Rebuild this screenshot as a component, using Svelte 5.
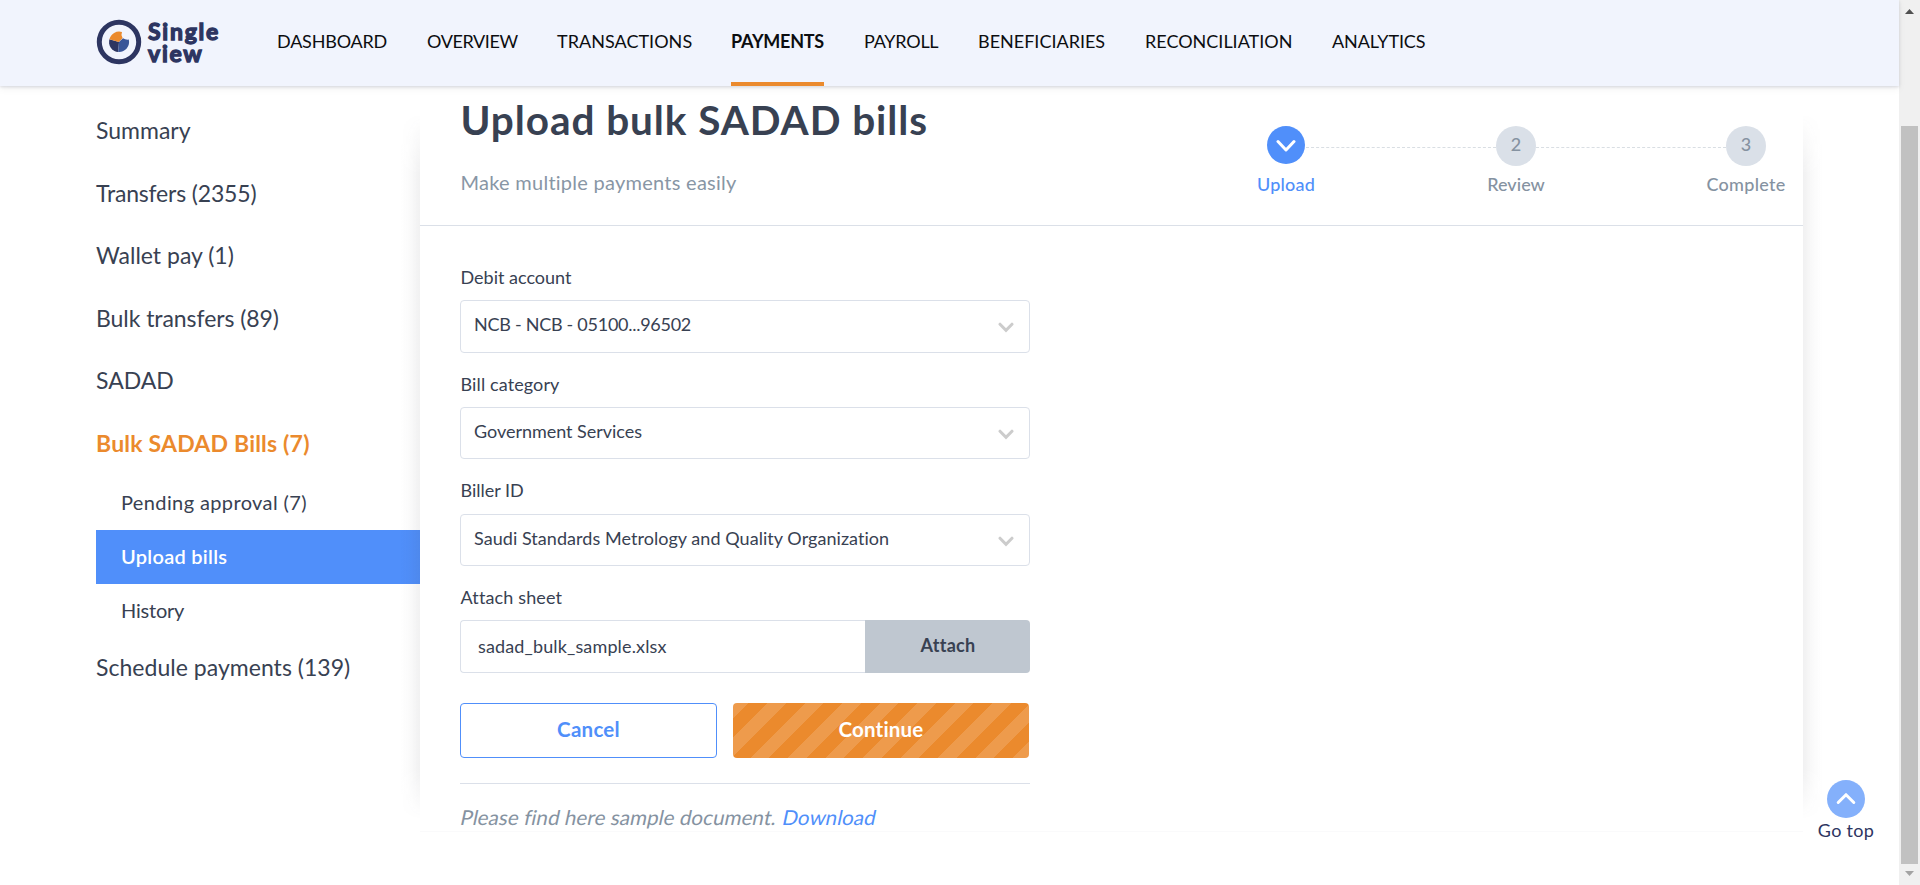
<script>
  const nav = [
    { label: 'DASHBOARD', width: 110, ls: -0.2 },
    { label: 'OVERVIEW', width: 90, ls: -0.4 },
    { label: 'TRANSACTIONS', width: 134, ls: 0.03 },
    { label: 'PAYMENTS', width: 93, ls: -0.25, active: true },
    { label: 'PAYROLL', width: 74, ls: -0.25 },
    { label: 'BENEFICIARIES', width: 127, ls: 0 },
    { label: 'RECONCILIATION', width: 147, ls: 0 },
    { label: 'ANALYTICS', width: 96, ls: -0.1 }
  ];
  const menu = [
    { label: 'Summary', ls: 0 },
    { label: 'Transfers (2355)', ls: -0.17 },
    { label: 'Wallet pay (1)', ls: 0 },
    { label: 'Bulk transfers (89)', ls: -0.06 },
    { label: 'SADAD', ls: 0 },
    { label: 'Bulk SADAD Bills (7)', ls: 0.2, active: true },
    { label: 'Pending approval (7)', ls: 0.38, sub: true },
    { label: 'Upload bills', ls: 0.28, sub: true, active: true },
    { label: 'History', ls: -0.2, sub: true },
    { label: 'Schedule payments (139)', ls: 0.03 }
  ];
  const fields = [
    { label: 'Debit account', ll: 0, value: 'NCB - NCB - 05100...96502', ls: -0.27 },
    { label: 'Bill category', ll: 0.12, value: 'Government Services', ls: -0.03 },
    { label: 'Biller ID', ll: 0, value: 'Saudi Standards Metrology and Quality Organization', ls: 0.05 }
  ];
</script>

<div class="page">
  <div class="view">
    <header>
      <a class="logo" href="#top" aria-label="Single view">
        <svg width="46" height="46" viewBox="0 0 46 46">
          <circle cx="23" cy="23" r="19.7" fill="none" stroke="#2d3561" stroke-width="5" />
          <path d="M23 23 L13.4 20.3 A10 10 0 0 0 22.2 33 Z" fill="#2d3561" />
          <path d="M23 23 L13.4 20.3 A10 10 0 0 1 26 13 A6 6 0 0 0 26.6 19 Z" fill="#eb8a2d" />
          <path d="M23 23 L27 19.3 Q29.5 21 32.8 20.6 A10 10 0 0 1 22.2 33 Z" fill="#3a5698" />
        </svg>
        <span class="brand"><span>Single</span><span>view</span></span>
      </a>
      <nav>
        {#each nav as n}
          <a href="#nav" class:active={n.active} style="width:{n.width}px;letter-spacing:{n.ls}px">{n.label}</a>
        {/each}
      </nav>
    </header>

    <div class="body">
      <aside>
        {#each menu as m}
          <a href="#menu" class:sub={m.sub} class:active={m.active} style="letter-spacing:{m.ls}px">{m.label}</a>
        {/each}
      </aside>

      <main>
        <section class="head">
          <div>
            <h1>Upload bulk SADAD bills</h1>
            <p>Make multiple payments easily</p>
          </div>
          <ol>
            <li class="done">
              <i><svg width="20" height="14" viewBox="0 0 20 14"><path d="M2 2.5 L10 11 L18 2.5" fill="none" stroke="#fff" stroke-width="3" stroke-linecap="round" stroke-linejoin="round" /></svg></i>
              <span class="s1">Upload</span>
            </li>
            <li class="line"></li>
            <li><i>2</i><span class="s2">Review</span></li>
            <li class="line"></li>
            <li><i>3</i><span class="s3">Complete</span></li>
          </ol>
        </section>

        <section class="form">
          {#each fields as f}
            <div class="field">
              <div class="label" style="letter-spacing:{f.ll}px">{f.label}</div>
              <div class="select">
                <span style="letter-spacing:{f.ls}px">{f.value}</span>
                <svg width="16" height="11" viewBox="0 0 16 11"><path d="M2 2.2 L8 8.3 L14 2.2" fill="none" stroke="#ccc" stroke-width="3" stroke-linecap="round" /></svg>
              </div>
            </div>
          {/each}
          <div class="field">
            <div class="label wide">Attach sheet</div>
            <div class="file">
              <span>sadad_bulk_sample.xlsx</span>
              <button>Attach</button>
            </div>
          </div>
          <div class="actions">
            <button class="cancel">Cancel</button>
            <button class="continue">Continue</button>
          </div>
          <div class="note"><span>Please find here sample document.</span><a href="#file">Download</a></div>
        </section>
      </main>
    </div>

    <a class="gotop" href="#top">
      <i><svg width="20" height="13" viewBox="0 0 20 13"><path d="M2.2 10.5 L10 2.7 L17.8 10.5" fill="none" stroke="#fff" stroke-width="3" stroke-linecap="round" stroke-linejoin="round" /></svg></i>
      <span>Go top</span>
    </a>
  </div>

  <div class="scroll">
    <svg width="9" height="5" viewBox="0 0 9 5"><path d="M0 5 L4.5 0 L9 5 Z" fill="#505050" /></svg>
    <div class="thumb"></div>
    <svg width="9" height="5" viewBox="0 0 9 5"><path d="M0 0 L4.5 5 L9 0 Z" fill="#a3a3a3" /></svg>
  </div>
</div>

<style>
  :global(body) { margin: 0; overflow: hidden; }
  .page { display: flex; height: 885px; font-family: Lato, "Open Sans", sans-serif; color: #384152; background: #fff; font-variant-ligatures: none; }
  .page * { box-sizing: border-box; }
  a { text-decoration: none; color: inherit; white-space: nowrap; }
  i { font-style: normal; }
  button { font-family: inherit; border: 0; padding: 0; margin: 0; font-variant-ligatures: none; }
  .view { width: 1899px; position: relative; }
  header { height: 86px; background: #f1f4fd; display: flex; box-shadow: 0 1px 3px rgba(40, 45, 80, .16), 0 3px 8px rgba(0, 0, 0, .05); position: relative; z-index: 3; }
  .logo { width: 277px; padding: 19px 0 0 95.5px; display: flex; flex: none; color: #2d3561; }
  .brand { display: flex; flex-direction: column; padding: 2px 0 0 6.5px; font-size: 23px; font-weight: 700; line-height: 21.5px; letter-spacing: 1.75px; -webkit-text-stroke: 1.3px #2d3561; stroke-linejoin: round; }
  nav { display: flex; gap: 40px; }
  nav a { height: 86px; font-size: 18px; line-height: 82px; color: #0c0d10; flex: none; }
  nav .active { font-weight: 700; border-bottom: 4px solid #eb8a2d; }
  .body { display: flex; }
  aside { width: 420px; padding: 15px 0 0 96px; display: flex; flex-direction: column; flex: none; }
  aside a { height: 62.5px; line-height: 59px; font-size: 23px; }
  aside .active { color: #eb8a2d; font-weight: 700; }
  aside .sub { height: 54px; line-height: 53px; font-size: 20px; padding-left: 25px; }
  aside .sub.active { background: #508ffa; color: #fff; font-weight: 600; }
  main { width: 1383px; height: 746px; position: relative; background: #fff; border-bottom: 1px solid #fafafb; }
  main::before, main::after { content: ''; position: absolute; top: 28px; bottom: 12px; width: 20px; -webkit-mask-image: linear-gradient(transparent, #000 60px, #000 calc(100% - 50px), transparent); mask-image: linear-gradient(transparent, #000 60px, #000 calc(100% - 50px), transparent); }
  main::before { left: -20px; background: linear-gradient(to left, rgba(60, 60, 70, .075), rgba(60, 60, 70, .02) 55%, transparent); }
  main::after { right: -20px; background: linear-gradient(to right, rgba(60, 60, 70, .075), rgba(60, 60, 70, .02) 55%, transparent); }
  .head { height: 140px; border-bottom: 1px solid #dbe0e8; padding: 10px 37px 0 40.5px; display: flex; justify-content: space-between; }
  h1 { margin: 0; font-size: 40.5px; line-height: 48px; font-weight: 700; letter-spacing: .93px; white-space: nowrap; }
  .head p { margin: 26px 0 0; font-size: 20px; line-height: 24px; color: #8896a5; letter-spacing: .26px; }
  ol { display: flex; list-style: none; margin: 30px 0 0; padding: 0; width: 500px; }
  li { width: 40px; display: flex; flex-direction: column; align-items: center; color: #8592a1; font-size: 18px; font-weight: 500; }
  li i { width: 40px; height: 40px; border-radius: 50%; background: #dae0e8; display: flex; align-items: center; justify-content: center; padding-bottom: 4px; flex: none; }
  li span { line-height: 24px; margin-top: 6px; white-space: nowrap; }
  .done { color: #508ffa; }
  .done i { width: 38px; height: 38px; background: #508ffa; padding: 2px 0 0; margin-bottom: 2px; }
  .line { flex: 1; height: 22px; border-bottom: 1px dashed #d9dee3; }
  .s1 { letter-spacing: .2px; }
  .s2 { letter-spacing: .05px; }
  .s3 { letter-spacing: .27px; }
  .form { width: 610px; padding: 39px 0 0 40px; }
  .field { height: 107px; }
  .field:nth-child(3) { height: 106px; }
  .label { font-size: 18px; line-height: 24px; margin-bottom: 11px; padding-left: .5px; }
  .field:nth-child(3) .label { line-height: 23px; margin-bottom: 12px; }
  .wide { letter-spacing: .14px; }
  .select { height: 53px; border: 1px solid #dbe0e9; border-radius: 4px; display: flex; justify-content: space-between; padding: 0 15px 0 13px; font-size: 18px; }
  .field:nth-child(2) .select, .field:nth-child(3) .select { height: 52px; }
  .select span { line-height: 46px; white-space: nowrap; }
  .select svg { margin-top: 21px; }
  .file { height: 53px; display: flex; font-size: 18px; }
  .file span { flex: 1; border: 1px solid #dbe0e9; border-right: 0; border-radius: 4px 0 0 4px; line-height: 51px; padding-left: 17px; letter-spacing: .14px; }
  .file button { width: 165px; background: #bfc7d0; border-radius: 0 4px 4px 0; font-size: 18px; font-weight: 700; color: #384152; letter-spacing: .25px; padding: 0 0 3px 1px; }
  .actions { display: flex; gap: 16px; margin-top: 11px; padding-bottom: 25px; border-bottom: 1px solid #dbe0e9; }
  .actions button { height: 55px; border-radius: 4px; font-size: 20.5px; font-weight: 700; padding-bottom: 4px; }
  .actions .cancel { width: 257px; background: #fff; border: 1px solid #508ffa; color: #508ffa; letter-spacing: .25px; }
  .actions .continue { width: 296px; color: #fff; letter-spacing: .2px; background: repeating-linear-gradient(135deg, #ee9b4c 0, #ee9b4c 11.2px, #eb8a2d 11.2px, #eb8a2d 24.4px, #ee9b4c 24.4px, #ee9b4c 26.52px); }
  .note { margin-top: 21px; font-size: 20.5px; line-height: 24px; color: #8592a1; display: flex; gap: 6px; white-space: nowrap; padding-left: 1px; }
  .note span, .note a { display: block; transform: skewX(-12deg); letter-spacing: .1px; }
  .note a { color: #508ffa; letter-spacing: .1px; }
  .gotop { position: absolute; left: 1816px; top: 780px; width: 60px; display: flex; flex-direction: column; align-items: center; color: #2d3561; font-size: 18px; }
  .gotop i { width: 38px; height: 38px; border-radius: 50%; background: #84b0fb; display: flex; align-items: center; justify-content: center; padding-bottom: 2px; }
  .gotop span { line-height: 24px; letter-spacing: .3px; }
  .scroll { width: 21px; background: #f0f0f0; padding: 9px 0 9px; display: flex; flex-direction: column; align-items: center; justify-content: space-between; }
  .thumb { width: 17px; height: 738px; background: #c1c1c1; margin-top: 105px; }
</style>
